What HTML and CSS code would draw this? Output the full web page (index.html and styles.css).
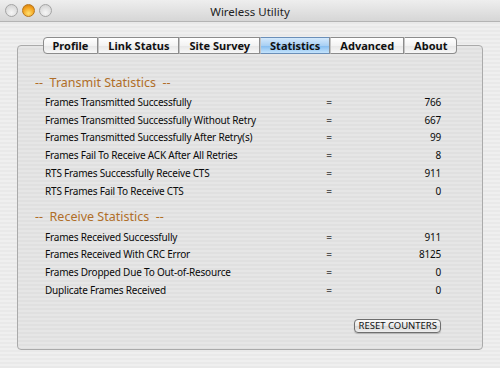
FILE: index.html
```html
<!DOCTYPE html>
<html lang="en">
<head>
    <meta charset="UTF-8">
    <title>Wireless Utility</title>
    <link rel="stylesheet" href="styles.css">
</head>
<body>
    <div class="titlebar">
        <div class="lights">
            <span class="light"></span>
            <span class="light light-min"></span>
            <span class="light"></span>
        </div>
        <div class="title">Wireless Utility</div>
    </div>

    <div class="window-body">
        <div class="tabs">
            <div class="tab">Profile</div>
            <div class="tab">Link Status</div>
            <div class="tab">Site Survey</div>
            <div class="tab active">Statistics</div>
            <div class="tab">Advanced</div>
            <div class="tab">About</div>
        </div>

        <div class="panel">
            <div class="section-title">--&nbsp; Transmit Statistics &nbsp;--</div>
            <div class="stats">
                <div class="label">Frames Transmitted Successfully</div><div class="eq">=</div><div class="value">766</div>
                <div class="label">Frames Transmitted Successfully Without Retry</div><div class="eq">=</div><div class="value">667</div>
                <div class="label">Frames Transmitted Successfully After Retry(s)</div><div class="eq">=</div><div class="value">99</div>
                <div class="label">Frames Fail To Receive ACK After All Retries</div><div class="eq">=</div><div class="value">8</div>
                <div class="label">RTS Frames Successfully Receive CTS</div><div class="eq">=</div><div class="value">911</div>
                <div class="label">RTS Frames Fail To Receive CTS</div><div class="eq">=</div><div class="value">0</div>
            </div>

            <div class="section-title receive">--&nbsp; Receive Statistics &nbsp;--</div>
            <div class="stats">
                <div class="label">Frames Received Successfully</div><div class="eq">=</div><div class="value">911</div>
                <div class="label">Frames Received With CRC Error</div><div class="eq">=</div><div class="value">8125</div>
                <div class="label">Frames Dropped Due To Out-of-Resource</div><div class="eq">=</div><div class="value">0</div>
                <div class="label">Duplicate Frames Received</div><div class="eq">=</div><div class="value">0</div>
            </div>

            <div class="actions">
                <button class="reset-button">RESET COUNTERS</button>
            </div>
        </div>
    </div>
</body>
</html>
```

FILE: styles.css
```css
html, body {
    margin: 0;
    width: 500px;
    height: 368px;
    overflow: hidden;
}

body {
    font-family: "Noto Sans", "DejaVu Sans", sans-serif;
    color: #111;
    background: repeating-linear-gradient(to bottom, #efefef 0, #efefef 2px, #e9e9e9 2px, #e9e9e9 4px);
}

/* title bar */
.titlebar {
    height: 21px;
    position: relative;
    display: flex;
    align-items: center;
    justify-content: center;
    border-bottom: 1px solid #b4b4b4;
    background: linear-gradient(to bottom, #eeeeee, #d6d6d6);
}

.lights {
    position: absolute;
    left: 5px;
    top: 4px;
    display: flex;
    gap: 4px;
}

.light {
    width: 11px;
    height: 11px;
    border-radius: 50%;
    border: 1px solid #a4a4a4;
    background: radial-gradient(circle at 50% 70%, #f6f6f6, #cdcdcd);
}

.light-min {
    border-color: #b8761a;
    background: radial-gradient(circle at 50% 75%, #ffe070, #f2a01c 60%, #c8740e);
}

.title {
    font-size: 11.5px;
    color: #222;
    padding-top: 1px;
}

/* tabs + panel */
.window-body {
    padding: 15px 17px 0 17px;
}

.tabs {
    display: flex;
    justify-content: center;
    position: relative;
    z-index: 1;
    margin-bottom: -9px;
}

.tab {
    flex: none;
    white-space: nowrap;
    height: 15px;
    line-height: 15px;
    padding: 0 9px;
    font-size: 11px;
    font-weight: bold;
    color: #111;
    border: 1px solid #8c8c8c;
    border-left: 1px solid #c4c4c4;
    background: linear-gradient(to bottom, #ffffff, #f3f3f3 50%, #e6e6e6 51%, #f8f8f8);
}

.tab:first-child {
    border-left: 1px solid #8c8c8c;
    border-radius: 4px 0 0 4px;
}

.tab:last-child {
    border-radius: 0 4px 4px 0;
}

.tab.active {
    background: linear-gradient(to bottom, #d4e9fc, #a9d0f4 50%, #82bbef 51%, #c4e3fc);
    border-top-color: #6b8fb8;
    border-bottom-color: #6b8fb8;
}

.panel {
    height: 305px;
    box-sizing: border-box;
    border: 1px solid #aaa;
    border-radius: 4px;
    padding: 28px 41px 0 17px;
    background: repeating-linear-gradient(to bottom, #e6e6e6 0, #e6e6e6 2px, #e0e0e0 2px, #e0e0e0 4px);
}

.section-title {
    font-size: 12.5px;
    color: #b06e28;
    line-height: 18px;
    margin-bottom: 1px;
}

.section-title.receive {
    margin-top: 8px;
    margin-bottom: 2px;
}

.stats {
    display: grid;
    grid-template-columns: 1fr 24px 100px;
    grid-auto-rows: 17.8px;
    align-items: center;
    padding-left: 10px;
    font-size: 10px;
    letter-spacing: -0.2px;
    color: #0a0a0a;
}

.eq {
    text-align: center;
    color: #555;
}

.value {
    text-align: right;
}

.actions {
    display: flex;
    justify-content: flex-end;
    margin-top: 20px;
}

.reset-button {
    font-family: "Noto Sans", "DejaVu Sans", sans-serif;
    font-size: 9.5px;
    line-height: 12px;
    color: #111;
    height: 14px;
    padding: 0 3px;
    border: 1px solid #6f6f6f;
    border-radius: 4px;
    background: linear-gradient(to bottom, #fafafa, #e8e8e8 50%, #d6d6d6 51%, #efefef);
    box-shadow: 0 1px 1px rgba(0, 0, 0, 0.2);
}
```
